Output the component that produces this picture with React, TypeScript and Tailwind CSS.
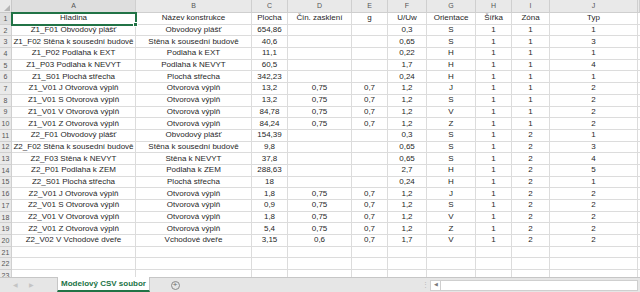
import React from "react";

const cols = ["A", "B", "C", "D", "E", "F", "G", "H", "I", "J", ""];

const rows: string[][] = [
  ["Hladina", "Název konstrukce", "Plocha", "Čin. zasklení", "g", "U/Uw", "Orientace", "Šířka", "Zóna", "Typ"],
  ["Z1_F01 Obvodový plášť", "Obvodový plášť", "654,86", "", "", "0,3", "S", "1", "1", "1"],
  ["Z1_F02 Stěna k sousední budově", "Stěna k sousední budově", "40,6", "", "", "0,65", "S", "1", "1", "3"],
  ["Z1_P02 Podlaha k EXT", "Podlaha k EXT", "11,1", "", "", "0,22", "H", "1", "1", "1"],
  ["Z1_P03 Podlaha k NEVYT", "Podlaha k NEVYT", "60,5", "", "", "1,7", "H", "1", "1", "4"],
  ["Z1_S01 Plochá střecha", "Plochá střecha", "342,23", "", "", "0,24", "H", "1", "1", "1"],
  ["Z1_V01 J Otvorová výplň", "Otvorová výplň", "13,2", "0,75", "0,7", "1,2", "J", "1", "1", "2"],
  ["Z1_V01 S Otvorová výplň", "Otvorová výplň", "13,2", "0,75", "0,7", "1,2", "S", "1", "1", "2"],
  ["Z1_V01 V Otvorová výplň", "Otvorová výplň", "84,78", "0,75", "0,7", "1,2", "V", "1", "1", "2"],
  ["Z1_V01 Z Otvorová výplň", "Otvorová výplň", "84,24", "0,75", "0,7", "1,2", "Z", "1", "1", "2"],
  ["Z2_F01 Obvodový plášť", "Obvodový plášť", "154,39", "", "", "0,3", "S", "1", "2", "1"],
  ["Z2_F02 Stěna k sousední budově", "Stěna k sousední budově", "9,8", "", "", "0,65", "S", "1", "2", "3"],
  ["Z2_F03 Stěna k NEVYT", "Stěna k NEVYT", "37,8", "", "", "0,65", "S", "1", "2", "4"],
  ["Z2_P01 Podlaha k ZEM", "Podlaha k ZEM", "288,63", "", "", "2,7", "H", "1", "2", "5"],
  ["Z2_S01 Plochá střecha", "Plochá střecha", "18", "", "", "0,24", "H", "1", "2", "1"],
  ["Z2_V01 J Otvorová výplň", "Otvorová výplň", "1,8", "0,75", "0,7", "1,2", "J", "1", "2", "2"],
  ["Z2_V01 S Otvorová výplň", "Otvorová výplň", "0,9", "0,75", "0,7", "1,2", "S", "1", "2", "2"],
  ["Z2_V01 V Otvorová výplň", "Otvorová výplň", "1,8", "0,75", "0,7", "1,2", "V", "1", "2", "2"],
  ["Z2_V01 Z Otvorová výplň", "Otvorová výplň", "5,4", "0,75", "0,7", "1,2", "Z", "1", "2", "2"],
  ["Z2_V02 V Vchodové dveře", "Vchodové dveře", "3,15", "0,6", "0,7", "1,7", "V", "1", "2", "2"],
  ["", "", "", "", "", "", "", "", "", ""],
  ["", "", "", "", "", "", "", "", "", ""],
  ["", "", "", "", "", "", "", "", "", ""],
];

const grid =
  "grid grid-cols-[12px_124px_116px_36px_64px_36px_39px_49px_36px_38px_88px_1fr]";

export default function App() {
  return (
    <div
      className="w-[640px] h-[292px] bg-white overflow-hidden flex flex-col text-[#1f1f1f]"
      style={{ fontFamily: "'Liberation Sans', Arial, sans-serif" }}
    >
      <div className="h-[277px] overflow-hidden">
        {/* column headers */}
        <div className={`${grid} h-[13px] bg-[#e9e9e9] text-[7px] text-[#555]`}>
          <div className="relative border-r border-b border-[#c8c8c8]">
            <div className="absolute right-[1px] bottom-[1px] w-0 h-0 border-l-[6px] border-l-transparent border-b-[6px] border-b-[#b5b5b5]" />
          </div>
          {cols.map((c, i) => (
            <div
              key={i}
              className={`flex items-center justify-center border-r border-b border-[#cfcfcf] ${
                i === 0 ? "bg-[#dedede]" : ""
              }`}
            >
              {c}
            </div>
          ))}
        </div>

        {rows.map((r, ri) => (
          <div key={ri} className={`${grid} h-[11.7px] text-[8px] leading-none`}>
            <div
              className={`flex items-center justify-center text-[7px] text-[#555] border-r border-b border-[#d0d0d0] ${
                ri === 0 ? "bg-[#dedede]" : "bg-[#e9e9e9]"
              }`}
            >
              {ri + 1}
            </div>
            {r.map((v, ci) => (
              <div
                key={ci}
                className={`relative flex items-center justify-center whitespace-nowrap border-r border-b border-[#dcdcdc] ${
                  ri === 0 && ci === 0 ? "outline-2 outline-[#217346] -outline-offset-1 z-10" : ""
                }`}
              >
                {v}
                {ri === 0 && ci === 0 && (
                  <span className="absolute right-[-3px] bottom-[-3px] w-[5px] h-[5px] bg-[#217346] border border-white" />
                )}
              </div>
            ))}
            <div className="border-b border-[#dcdcdc]" />
          </div>
        ))}
      </div>

      {/* sheet tabs */}
      <div className="h-[15px] bg-[#e6e6e6] border-t border-[#c6c6c6] flex items-stretch text-[8px]">
        <div className="w-[57px] flex items-center gap-[11px] pl-[13px] text-[#c4c4c4] text-[6px]">
          <span>◀</span>
          <span>▶</span>
        </div>
        <div className="w-[93px] bg-white flex items-center justify-center font-bold text-[#217346] border-b-2 border-[#217346] border-x border-x-[#c6c6c6] -mt-px">
          Modelový CSV soubor
        </div>
        <div className="w-[50px] flex items-center justify-center">
          <span className="w-[9px] h-[9px] rounded-full border border-[#8a8a8a] flex items-center justify-center text-[#6a6a6a] text-[8px] leading-none">
            +
          </span>
        </div>
        <div className="flex-1" />
        <div className="w-[10px] flex items-center justify-center text-[#b8b8b8] text-[7px]">⋮</div>
        <div className="w-[210px] flex items-center pr-[2px]">
          <div className="h-[11px] flex-1 bg-white border border-[#cfcfcf] flex items-center">
            <span className="w-[10px] h-full flex items-center justify-center border-r border-[#cfcfcf] text-[#7a7a7a] text-[5px]">◀</span>
          </div>
        </div>
      </div>
    </div>
  );
}
